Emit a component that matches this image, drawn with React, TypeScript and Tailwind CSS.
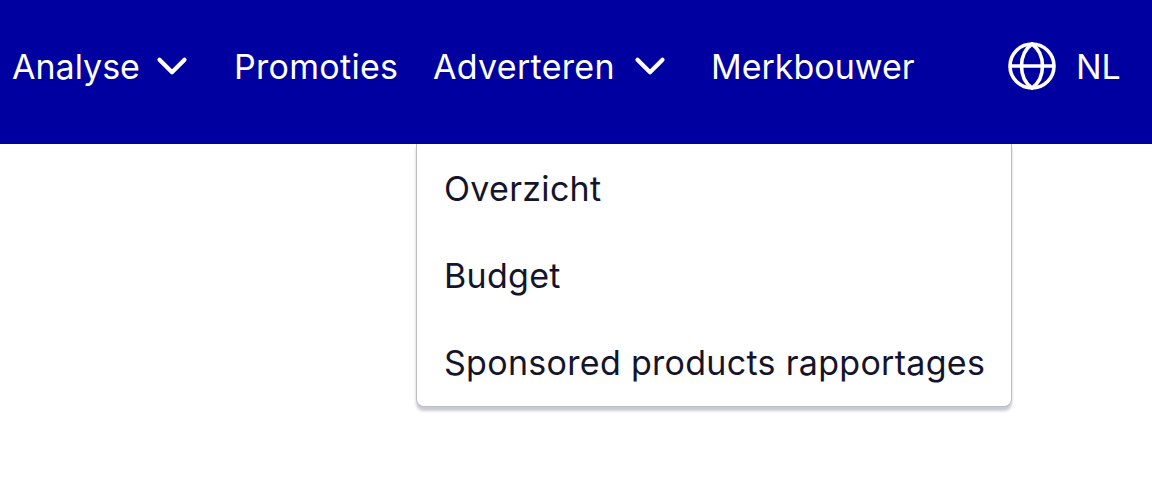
import { ChevronDown } from "lucide-react";

const menu = ["Overzicht", "Budget", "Sponsored products rapportages"];

function Globe() {
  return (
    <svg width="50" height="50" viewBox="0 0 50 50" fill="none" stroke="white" strokeWidth="3.6">
      <circle cx="25" cy="25" r="22" />
      <path d="M25 3C11 13 11 37 25 47C39 37 39 13 25 3Z" />
      <path d="M3 25h44" />
    </svg>
  );
}

export default function App() {
  return (
    <div className="h-[483px] overflow-hidden bg-white font-['Inter',sans-serif] text-[34px] tracking-[0.3px]">
      <header className="flex h-[144px] items-center bg-[#0000a0] pb-[12px] pl-[12px] text-white">
        <div className="flex w-[222px] items-center">
          <span className="tracking-normal">Analyse</span>
          <ChevronDown className="ml-[7px] h-[50px] w-[50px]" strokeWidth={2} />
        </div>
        <span className="w-[199px]">Promoties</span>
        <div className="relative flex w-[278px] items-center">
          <span>Adverteren</span>
          <ChevronDown className="ml-[10px] h-[50px] w-[50px]" strokeWidth={2} />
          <ul className="absolute left-[-17px] top-[103px] w-[596px] rounded-b-[8px] border border-t-0 border-[#bdbdc6] bg-white pt-[1px] text-[#14142b] shadow-[0_4px_3px_#c9c9d4]">
            {menu.map((m) => (
              <li key={m} className="flex h-[87px] items-center pl-[27px]">{m}</li>
            ))}
          </ul>
        </div>
        <span className="w-[297px] tracking-normal">Merkbouwer</span>
        <div className="-ml-[1px]"><Globe /></div>
        <span className="ml-[19px] tracking-normal">NL</span>
      </header>
    </div>
  );
}
